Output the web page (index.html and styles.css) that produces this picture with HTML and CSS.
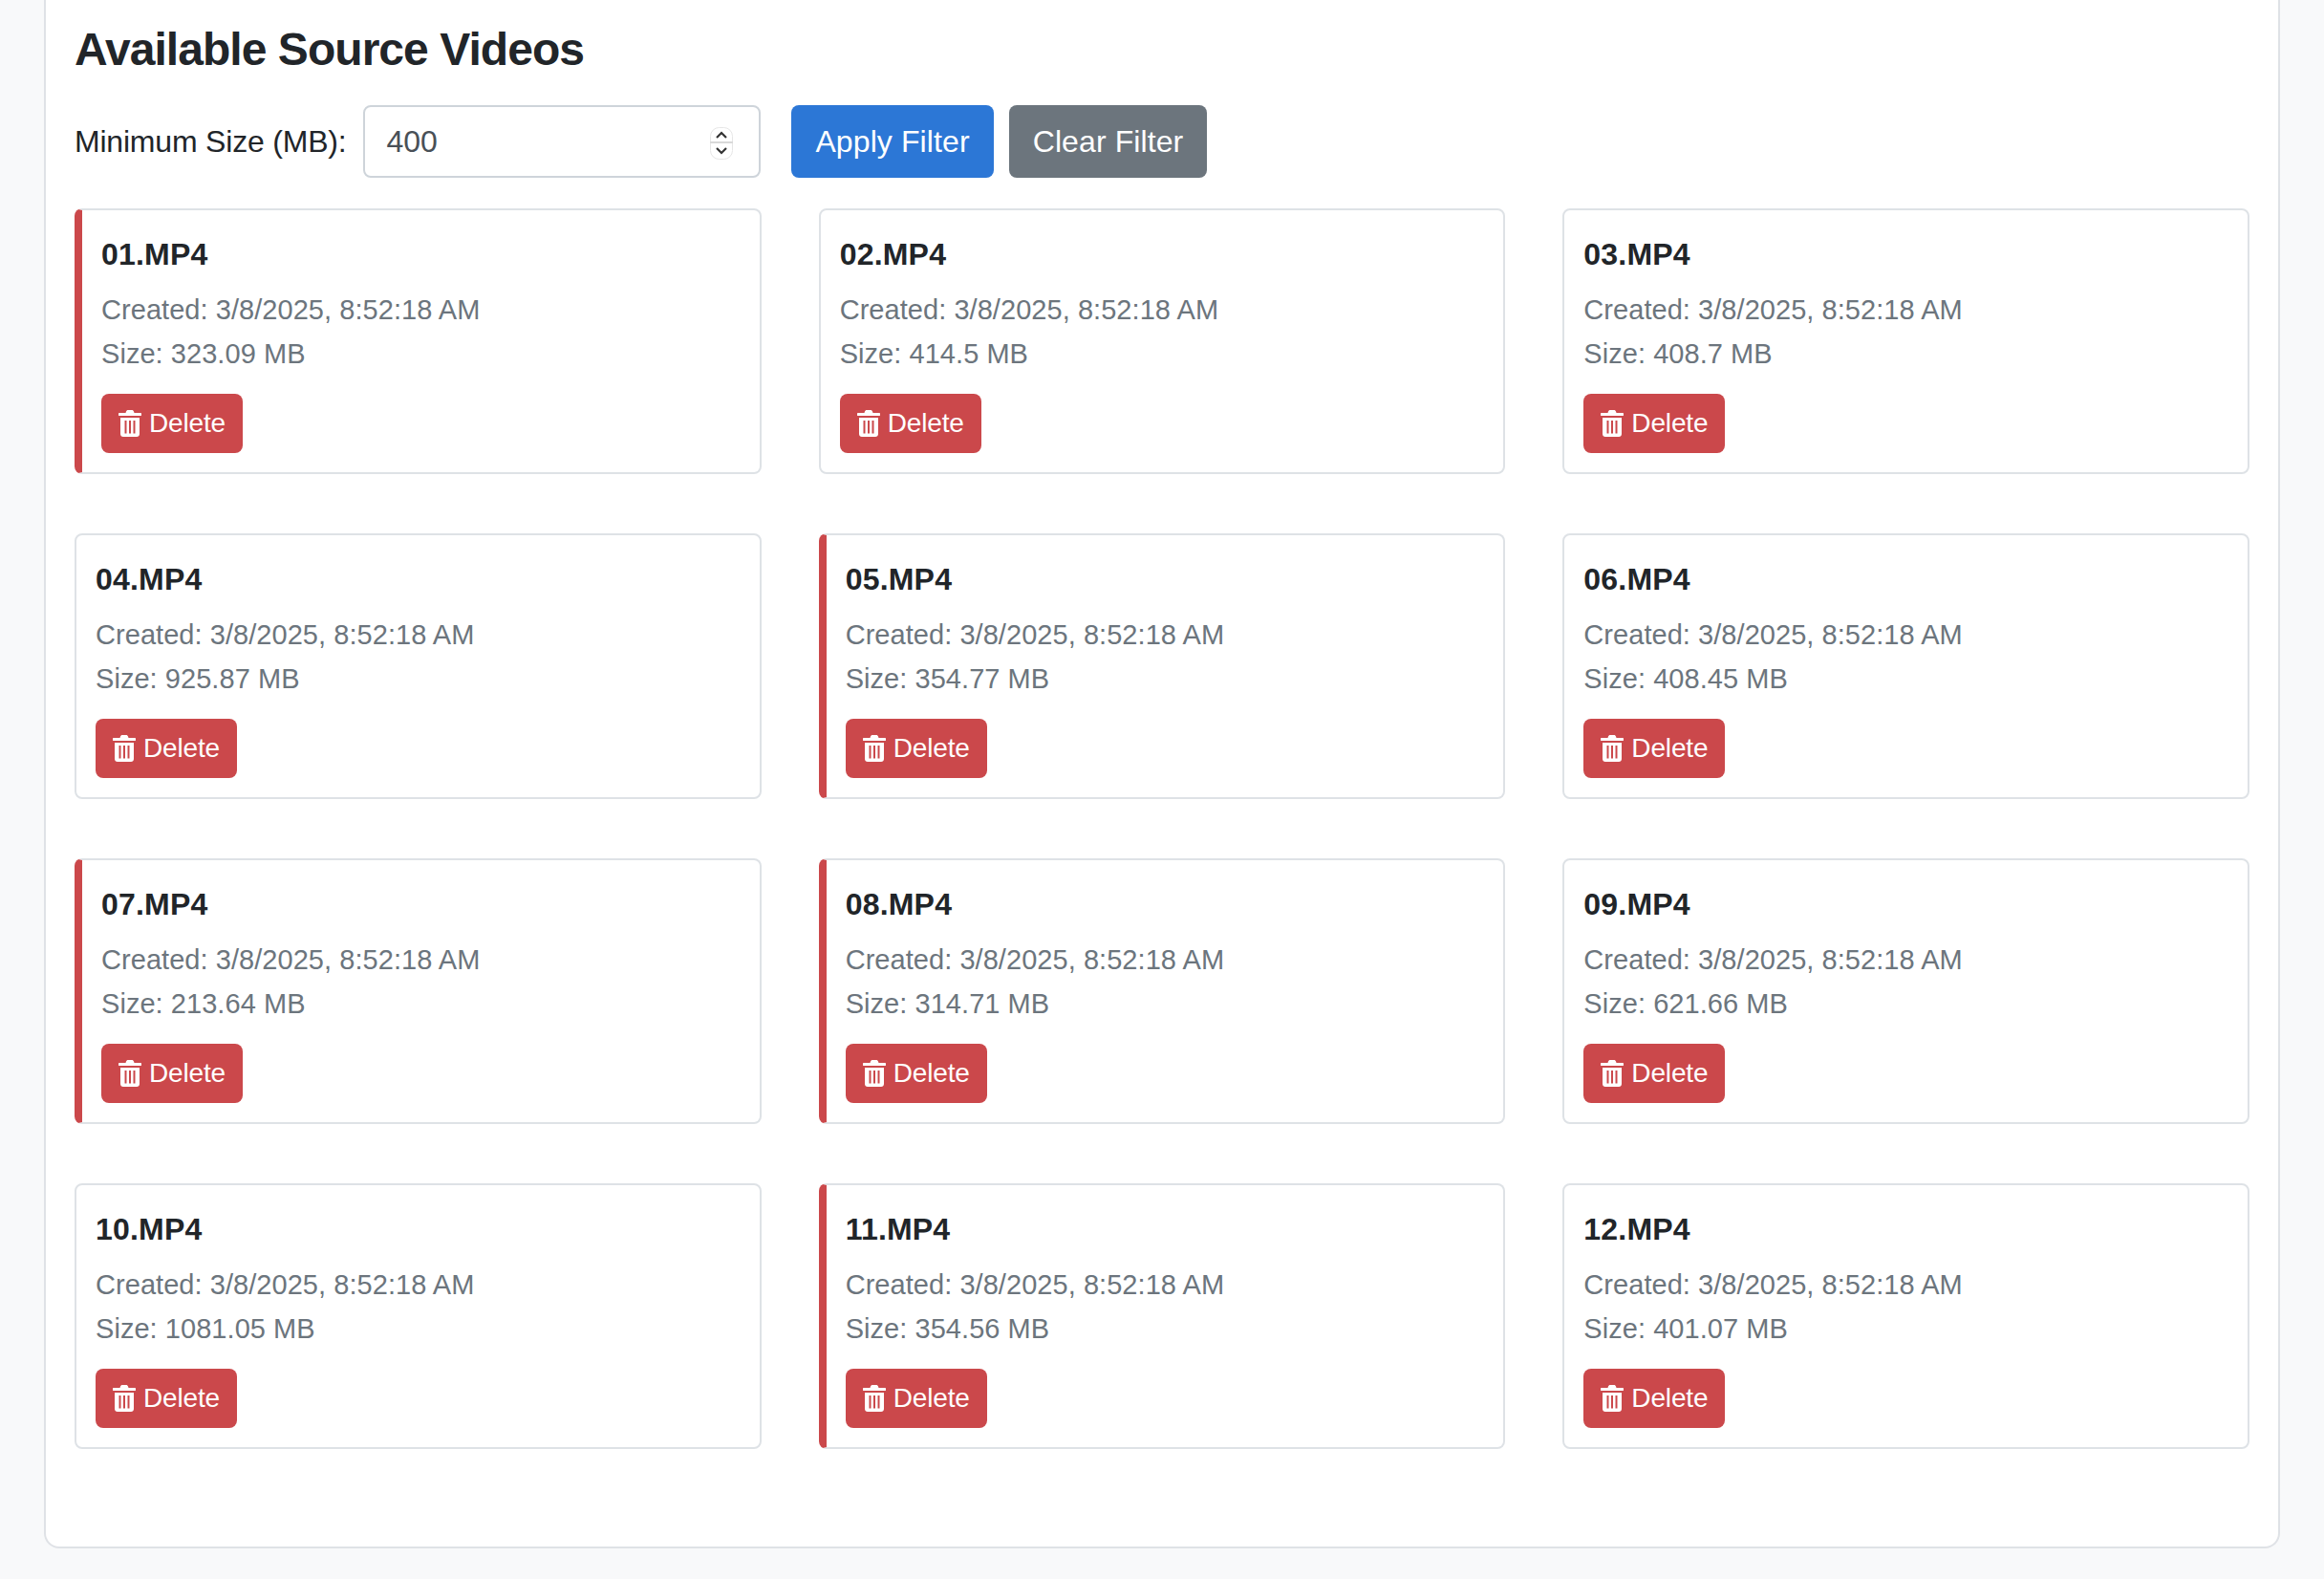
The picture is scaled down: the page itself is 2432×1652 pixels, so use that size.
FILE: index.html
```html
<!DOCTYPE html>
<html lang="en">
<head>
    <meta charset="UTF-8">
    <title>Available Source Videos</title>
    <link rel="stylesheet" href="styles.css">
</head>
<body>

    <svg class="icon-defs" width="0" height="0">
        <symbol id="trash" viewBox="0 0 24 28">
            <path fill-rule="evenodd" d="M8 1.500C8.300.6 9 0 10 0h4c1 0 1.700.6 2 1.500L16.500 3H23c.6 0 1 .4 1 1v1.500c0 .3-.2.5-.5.5H.5C.2 6 0 5.800 0 5.500V4c0-.6.4-1 1-1h6.500zM2 8h20v17c0 1.700-1.300 3-3 3H5c-1.700 0-3-1.300-3-3zm4.500 3v13.500h2V11zm4.500 0v13.500h2V11zm4.500 0v13.500h2V11z"/>
        </symbol>
    </svg>

    <main class="panel">
        <h2 class="panel-title">Available Source Videos</h2>

        <div class="filter-row">
            <label for="min-size">Minimum Size (MB):</label>
            <div class="number-field">
                <input type="text" id="min-size" value="400">
                <svg class="spinner" width="24" height="34" viewBox="0 0 24 34">
                    <rect x="0.500" y="0.500" width="23" height="33" rx="9" fill="#fff" stroke="#e6e6e6"/>
                    <path d="M0 16h24" stroke="#d9d9d9" stroke-width="2"/>
                    <path d="M7 11l5-5 5 5M7 22l5 5 5-5" fill="none" stroke="#333" stroke-width="2.200"/>
                </svg>
            </div>
            <button class="btn btn-primary">Apply Filter</button>
            <button class="btn btn-secondary">Clear Filter</button>
        </div>

        <div class="video-grid">
            <div class="video-card small-file">
                <h5>01.MP4</h5>
                <p>Created: 3/8/2025, 8:52:18 AM</p>
                <p>Size: 323.09 MB</p>
                <button class="delete-btn"><svg><use href="#trash"/></svg>Delete</button>
            </div>
            <div class="video-card">
                <h5>02.MP4</h5>
                <p>Created: 3/8/2025, 8:52:18 AM</p>
                <p>Size: 414.5 MB</p>
                <button class="delete-btn"><svg><use href="#trash"/></svg>Delete</button>
            </div>
            <div class="video-card">
                <h5>03.MP4</h5>
                <p>Created: 3/8/2025, 8:52:18 AM</p>
                <p>Size: 408.7 MB</p>
                <button class="delete-btn"><svg><use href="#trash"/></svg>Delete</button>
            </div>
            <div class="video-card">
                <h5>04.MP4</h5>
                <p>Created: 3/8/2025, 8:52:18 AM</p>
                <p>Size: 925.87 MB</p>
                <button class="delete-btn"><svg><use href="#trash"/></svg>Delete</button>
            </div>
            <div class="video-card small-file">
                <h5>05.MP4</h5>
                <p>Created: 3/8/2025, 8:52:18 AM</p>
                <p>Size: 354.77 MB</p>
                <button class="delete-btn"><svg><use href="#trash"/></svg>Delete</button>
            </div>
            <div class="video-card">
                <h5>06.MP4</h5>
                <p>Created: 3/8/2025, 8:52:18 AM</p>
                <p>Size: 408.45 MB</p>
                <button class="delete-btn"><svg><use href="#trash"/></svg>Delete</button>
            </div>
            <div class="video-card small-file">
                <h5>07.MP4</h5>
                <p>Created: 3/8/2025, 8:52:18 AM</p>
                <p>Size: 213.64 MB</p>
                <button class="delete-btn"><svg><use href="#trash"/></svg>Delete</button>
            </div>
            <div class="video-card small-file">
                <h5>08.MP4</h5>
                <p>Created: 3/8/2025, 8:52:18 AM</p>
                <p>Size: 314.71 MB</p>
                <button class="delete-btn"><svg><use href="#trash"/></svg>Delete</button>
            </div>
            <div class="video-card">
                <h5>09.MP4</h5>
                <p>Created: 3/8/2025, 8:52:18 AM</p>
                <p>Size: 621.66 MB</p>
                <button class="delete-btn"><svg><use href="#trash"/></svg>Delete</button>
            </div>
            <div class="video-card">
                <h5>10.MP4</h5>
                <p>Created: 3/8/2025, 8:52:18 AM</p>
                <p>Size: 1081.05 MB</p>
                <button class="delete-btn"><svg><use href="#trash"/></svg>Delete</button>
            </div>
            <div class="video-card small-file">
                <h5>11.MP4</h5>
                <p>Created: 3/8/2025, 8:52:18 AM</p>
                <p>Size: 354.56 MB</p>
                <button class="delete-btn"><svg><use href="#trash"/></svg>Delete</button>
            </div>
            <div class="video-card">
                <h5>12.MP4</h5>
                <p>Created: 3/8/2025, 8:52:18 AM</p>
                <p>Size: 401.07 MB</p>
                <button class="delete-btn"><svg><use href="#trash"/></svg>Delete</button>
            </div>
        </div>
    </main>

</body>
</html>
```

FILE: styles.css
```css
body {
    font-family: "Liberation Sans", Arial, sans-serif;
    margin: 0;
    padding: 0 46px 32px;
    background-color: #f8f9fa;
    color: #212529;
}

.icon-defs {
    display: block;
}

.panel {
    background-color: #fff;
    border: 2px solid #dfe2e6;
    border-top: none;
    border-radius: 0 0 16px 16px;
    padding: 23px 30px 102px;
}

.panel-title {
    font-size: 48px;
    font-weight: bold;
    letter-spacing: -0.95px;
    line-height: 58px;
    margin: 0 0 29px;
}

.filter-row {
    display: flex;
    align-items: center;
    margin-bottom: 32px;
}

.filter-row label {
    font-size: 32px;
    letter-spacing: -0.2px;
    margin-right: 18px;
}

.number-field {
    position: relative;
    margin-right: 32px;
}

.number-field input {
    display: block;
    box-sizing: border-box;
    width: 416px;
    height: 76px;
    padding: 0 22px;
    font-family: inherit;
    font-size: 32px;
    color: #495057;
    border: 2px solid #ced4da;
    border-radius: 8px;
}

.spinner {
    position: absolute;
    top: 23px;
    right: 29px;
}

.btn {
    height: 76px;
    padding: 0 25px;
    font-family: inherit;
    font-size: 32px;
    letter-spacing: 0.1px;
    color: #fff;
    border: none;
    border-radius: 8px;
}

.btn-primary {
    background-color: #2c77d6;
    margin-right: 16px;
}

.btn-secondary {
    background-color: #6c757d;
}

.video-grid {
    display: grid;
    grid-template-columns: repeat(3, 1fr);
    column-gap: 60px;
    row-gap: 62px;
}

.video-card {
    border: 2px solid #dee2e6;
    border-radius: 8px;
    padding: 27px 20px 20px;
}

.video-card.small-file {
    border-left: 8px solid #cb484b;
}

.video-card h5 {
    font-size: 32px;
    font-weight: bold;
    letter-spacing: 0.2px;
    line-height: 38px;
    margin: 0 0 16px;
}

.video-card p {
    font-size: 29px;
    letter-spacing: 0.05px;
    line-height: 46px;
    margin: 0;
    color: #6c757d;
}

.delete-btn {
    display: flex;
    align-items: center;
    gap: 8px;
    height: 62px;
    margin-top: 19px;
    padding: 0 18px;
    font-family: inherit;
    font-size: 28px;
    letter-spacing: -0.15px;
    color: #fff;
    background-color: #cb484b;
    border: none;
    border-radius: 8px;
}

.delete-btn svg {
    width: 24px;
    height: 28px;
    fill: currentColor;
}
```
